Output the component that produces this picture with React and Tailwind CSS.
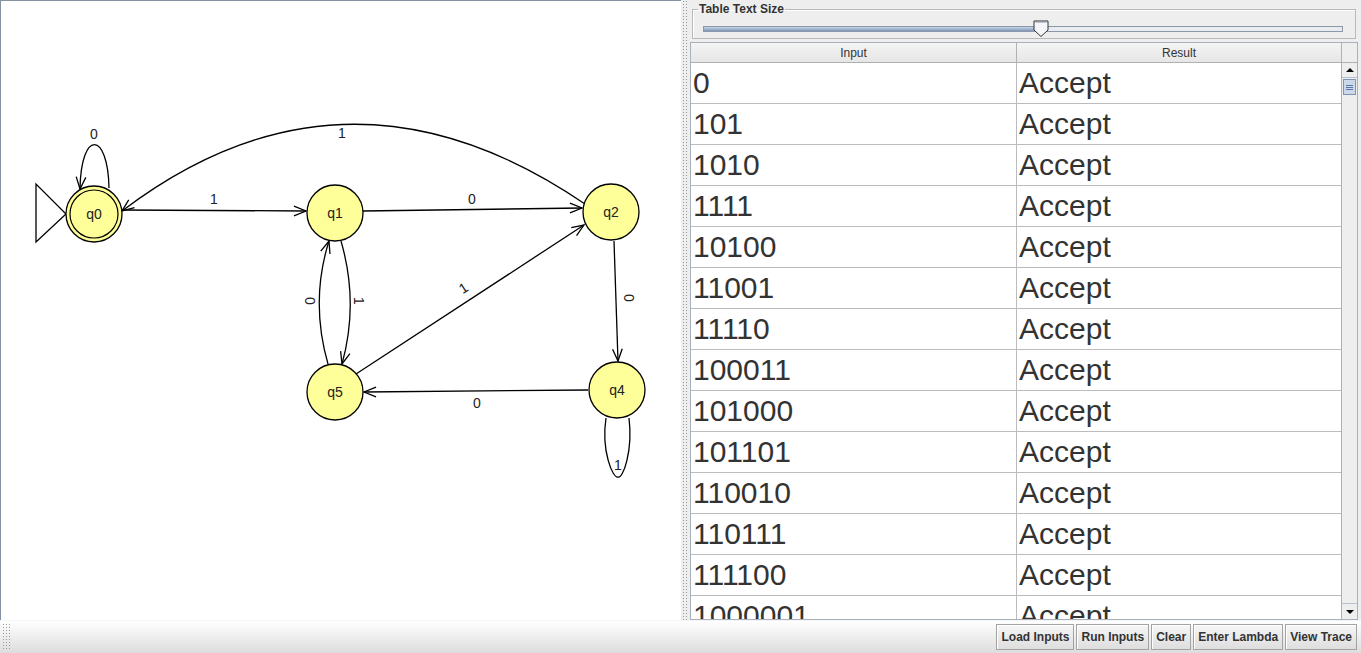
import React from "react";

const rows = [
  "0",
  "101",
  "1010",
  "1111",
  "10100",
  "11001",
  "11110",
  "100011",
  "101000",
  "101101",
  "110010",
  "110111",
  "111100",
  "1000001",
];

const states = [
  { id: "q0", x: 93, y: 213, final: true },
  { id: "q1", x: 334, y: 212 },
  { id: "q2", x: 610, y: 211 },
  { id: "q4", x: 616, y: 389 },
  { id: "q5", x: 334, y: 391 },
];

// open "V" arrow head at tip, pointing along (dx, dy)
const Head = ({ x, y, dx, dy }) => {
  const a = Math.atan2(dy, dx);
  const L = 13;
  const s = 0.38;
  const p1 = [x - L * Math.cos(a - s), y - L * Math.sin(a - s)];
  const p2 = [x - L * Math.cos(a + s), y - L * Math.sin(a + s)];
  return (
    <polyline
      points={`${p1[0]},${p1[1]} ${x},${y} ${p2[0]},${p2[1]}`}
      fill="none"
      stroke="#000"
      strokeWidth="1.3"
    />
  );
};

const Label = ({ x, y, r = 0, children }) => (
  <text
    x={x}
    y={y}
    transform={r ? `rotate(${r} ${x} ${y})` : undefined}
    textAnchor="middle"
    dominantBaseline="middle"
    fontSize="14"
    fontFamily="'Liberation Sans', Arial, sans-serif"
    fill="#222"
  >
    {children}
  </text>
);

const Diagram = () => (
  <svg width="681" height="619" viewBox="0 0 681 619" className="block">
    <g fill="none" stroke="#000" strokeWidth="1.3">
      {/* initial triangle */}
      <polygon points="35,183 35,241 65,213" />
      {/* q0 loop */}
      <path d="M108 187 C 107 130, 80 128, 79 188" />
      {/* q0 -> q1 */}
      <path d="M121 209 L305 210" />
      {/* q1 -> q2 */}
      <path d="M362 210 L581 207" />
      {/* q2 -> q0 */}
      <path d="M584 203 Q 345 40, 121 210" />
      {/* q2 -> q4 */}
      <path d="M613 240 L617 360" />
      {/* q4 -> q5 */}
      <path d="M587 389 L363 391" />
      {/* q5 -> q2 */}
      <path d="M355 373 L583 224" />
      {/* q1 -> q5 */}
      <path d="M340 240 Q 358 302, 341 363" />
      {/* q5 -> q1 */}
      <path d="M327 363 Q 309 300, 328 240" />
      {/* q4 loop */}
      <path d="M605 417 C 600 450, 612 478, 617 476 C 622 478, 632 450, 628 417" />
    </g>
    <Head x={79} y={188} dx={-1} dy={12} />
    <Head x={305} y={210} dx={1} dy={0} />
    <Head x={581} y={207} dx={1} dy={0} />
    <Head x={121} y={210} dx={-224} dy={170} />
    <Head x={617} y={360} dx={0.5} dy={10} />
    <Head x={363} y={391} dx={-1} dy={0} />
    <Head x={583} y={224} dx={228} dy={-149} />
    <Head x={341} y={363} dx={-17} dy={61} />
    <Head x={328} y={240} dx={19} dy={-60} />
    {states.map((s) => (
      <g key={s.id}>
        <circle cx={s.x} cy={s.y} r="28" fill="#ffff99" stroke="#000" strokeWidth="1.3" />
        {s.final && <circle cx={s.x} cy={s.y} r="24" fill="none" stroke="#000" strokeWidth="1.2" />}
        <text
          x={s.x}
          y={s.y + 1}
          textAnchor="middle"
          dominantBaseline="middle"
          fontSize="14"
          fontFamily="'Liberation Sans', Arial, sans-serif"
          fill="#222"
        >
          {s.id}
        </text>
      </g>
    ))}
    <Label x={93} y={134}>0</Label>
    <Label x={213} y={199}>1</Label>
    <Label x={471} y={199}>0</Label>
    <Label x={341} y={133}>1</Label>
    <Label x={627} y={297} r={90}>0</Label>
    <Label x={476} y={403}>0</Label>
    <Label x={463} y={288} r={-33}>1</Label>
    <Label x={308} y={300} r={90}>0</Label>
    <Label x={357} y={300} r={90}>1</Label>
    <Label x={617} y={465}>1</Label>
  </svg>
);

const Dots = ({ className = "" }) => (
  <div
    className={`bg-[radial-gradient(circle,#9a9a9a_0.8px,transparent_1px)] bg-size-[3px_3px] ${className}`}
  />
);

const Slider = () => (
  <div className="relative h-[20px] mx-[10px] mt-[4px]">
    <div className="absolute left-0 right-[2px] top-[6px] h-[6px] border border-[#8c98a8] bg-[#e8ecf0]">
      <div className="h-full w-[53%] bg-gradient-to-b from-[#c9d6e6] to-[#7d97bd]" />
    </div>
    <svg className="absolute left-[330px] top-0" width="17" height="18" viewBox="0 0 17 18">
      <path d="M1 1 H15 V10 L8 16.5 L1 10 Z" fill="#f4f6f9" stroke="#333" strokeWidth="1" />
      <path d="M2.5 2.5 H13.5" stroke="#b8c4d4" strokeWidth="1" />
    </svg>
  </div>
);

const ScrollBar = () => (
  <div className="w-[16px] flex flex-col bg-[#eeeeee] border-l border-[#a8b0bb]">
    <div className="h-[15px] flex items-center justify-center border-b border-[#b8c0cb] bg-[#eeeeee]">
      <div className="w-0 h-0 border-x-[4px] border-x-transparent border-b-[4px] border-b-black" />
    </div>
    <div className="h-[16px] mx-[1px] mt-[1px] border border-[#7f94b4] bg-[#ccd8ea] flex flex-col justify-center gap-[1px] px-[2px]">
      <div className="h-[1px] bg-[#5b77a6]" />
      <div className="h-[1px] bg-[#5b77a6]" />
      <div className="h-[1px] bg-[#5b77a6]" />
    </div>
    <div className="flex-1" />
    <div className="h-[16px] flex items-center justify-center border-t border-[#b8c0cb]">
      <div className="w-0 h-0 border-x-[4px] border-x-transparent border-t-[4px] border-t-black" />
    </div>
  </div>
);

const buttons = ["Load Inputs", "Run Inputs", "Clear", "Enter Lambda", "View Trace"];

export default function App() {
  return (
    <div className="w-[1361px] h-[653px] flex flex-col bg-[#eeeeee] overflow-hidden font-['Liberation_Sans',Arial,sans-serif]">
      <div className="h-[620px] flex">
        <div className="w-[681px] bg-white border-t border-l border-[#8391a0] overflow-hidden">
          <Diagram />
        </div>
        <Dots className="w-[7px] mx-[1px]" />
        <div className="flex-1 flex flex-col pr-[3px]">
          <fieldset className="mt-[2px] mx-[2px] h-[37px] border border-[#b9b9b9] shadow-[inset_1px_1px_0_#fff] px-0">
            <legend className="ml-[5px] px-[1px] text-[12px] font-bold text-[#333] leading-[14px]">
              Table Text Size
            </legend>
            <Slider />
          </fieldset>
          <div className="mt-[3px] flex-1 flex border border-[#a8b0bb] min-h-0">
            <div className="flex-1 flex flex-col min-w-0">
              <div className="h-[20px] flex bg-gradient-to-b from-[#f4f4f4] to-[#e6e6e6] border-b border-[#b0b0b0]">
                <div className="w-[326px] border-r border-[#b0b0b0] text-center text-[12px] leading-[20px] text-[#333]">
                  Input
                </div>
                <div className="flex-1 text-center text-[12px] leading-[20px] text-[#333]">Result</div>
              </div>
              <div className="flex-1 overflow-hidden bg-white">
                {rows.map((r) => (
                  <div key={r} className="h-[41px] flex border-b border-[#bcbcbc] shrink-0">
                    <div className="w-[326px] border-r border-[#bcbcbc] pl-[2px] text-[30px] leading-[40px] text-[#333] whitespace-nowrap">
                      {r}
                    </div>
                    <div className="flex-1 pl-[2px] text-[30px] leading-[40px] text-[#333]">Accept</div>
                  </div>
                ))}
              </div>
            </div>
            <div className="flex flex-col">
              <div className="h-[20px] w-[16px] bg-[#eeeeee] border-l border-b border-[#b0b0b0]" />
              <div className="flex-1 flex">
                <ScrollBar />
              </div>
            </div>
          </div>
        </div>
      </div>
      <div className="h-[33px] flex items-center bg-gradient-to-b from-white to-[#dddddd] border-t border-[#f4f4f4]">
        <Dots className="w-[8px] h-[28px] ml-[2px]" />
        <div className="ml-auto mr-[4px] flex gap-[2px]">
          {buttons.map((b) => (
            <button
              key={b}
              className="h-[26px] px-[4px] border border-[#a3a3a3] bg-gradient-to-b from-[#f6f6f6] to-[#dedede] shadow-[inset_1px_1px_0_#fff] text-[12px] font-bold text-[#333]"
            >
              {b}
            </button>
          ))}
        </div>
      </div>
    </div>
  );
}
